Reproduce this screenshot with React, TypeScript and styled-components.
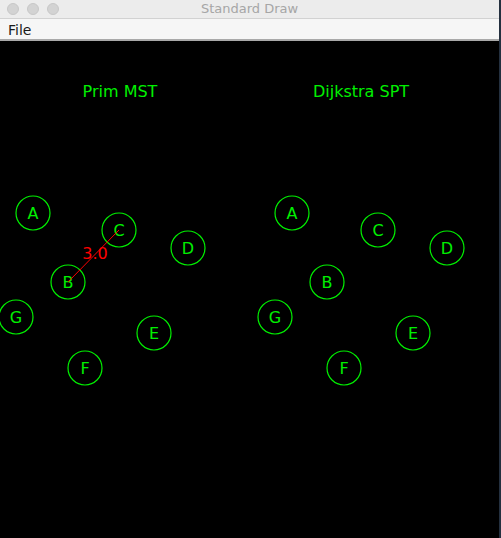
import React from "react";
import styled, { createGlobalStyle } from "styled-components";

const Global = createGlobalStyle`
  html, body { margin: 0; padding: 0; }
  body {
    background: #24303f;
    width: 501px;
    height: 538px;
    overflow: hidden;
    font-family: "DejaVu Sans", "Liberation Sans", sans-serif;
  }
`;

const Window = styled.div`
  width: 499px;
  height: 538px;
  display: flex;
  flex-direction: column;
  background: #000;
`;

const TitleBar = styled.div`
  height: 18px;
  background: #ececec;
  border-bottom: 1px solid #d2d2d2;
  display: flex;
  align-items: center;
  position: relative;
  padding-left: 7px;
  gap: 8px;
`;

const Light = styled.span`
  width: 12px;
  height: 12px;
  border-radius: 50%;
  background: #d3d3d3;
  border: 0.5px solid #c8c8c8;
  box-sizing: border-box;
`;

const Title = styled.div`
  position: absolute;
  left: 0;
  right: 0;
  top: 0;
  height: 18px;
  line-height: 18px;
  text-align: center;
  font-size: 13px;
  color: #a6a6a6;
  font-family: "DejaVu Sans", "Liberation Sans", sans-serif;
`;

const MenuBar = styled.div`
  height: 20px;
  background: #f6f6f6;
  border-bottom: 2px solid #a9a9a9;
  display: flex;
  align-items: center;
  padding-left: 8px;
`;

const MenuItem = styled.span`
  font-size: 14px;
  color: #1a1a1a;
  padding-top: 2px;
`;

const Canvas = styled.svg`
  display: block;
  flex: 1;
  width: 499px;
  background: #000;
`;

type Node = { id: string; x: number; y: number };

const leftNodes: Node[] = [
  { id: "A", x: 33, y: 213 },
  { id: "C", x: 119, y: 230 },
  { id: "D", x: 188, y: 248 },
  { id: "B", x: 68, y: 282 },
  { id: "G", x: 16, y: 317 },
  { id: "E", x: 154, y: 333 },
  { id: "F", x: 85, y: 368 },
];

const rightNodes: Node[] = [
  { id: "A", x: 292, y: 213 },
  { id: "C", x: 378, y: 230 },
  { id: "D", x: 447, y: 248 },
  { id: "B", x: 327, y: 282 },
  { id: "G", x: 275, y: 317 },
  { id: "E", x: 413, y: 333 },
  { id: "F", x: 344, y: 368 },
];

const OFF = 41;
const GREEN = "#00f000";

function Graph({ nodes }: { nodes: Node[] }) {
  return (
    <g>
      {nodes.map((n) => (
        <g key={n.id}>
          <circle cx={n.x} cy={n.y - OFF} r={17} fill="none" stroke={GREEN} strokeWidth={1.2} />
          <text
            x={n.x}
            y={n.y - OFF + 6}
            textAnchor="middle"
            fontSize={16}
            fill={GREEN}
            fontFamily="DejaVu Sans, Liberation Sans, sans-serif"
          >
            {n.id}
          </text>
        </g>
      ))}
    </g>
  );
}

export default function App() {
  return (
    <>
      <Global />
      <Window>
        <TitleBar>
          <Light />
          <Light />
          <Light />
          <Title>Standard Draw</Title>
        </TitleBar>
        <MenuBar>
          <MenuItem>File</MenuItem>
        </MenuBar>
        <Canvas viewBox="0 0 499 497">
          <text x={120} y={97 - OFF} textAnchor="middle" fontSize={16} fill={GREEN} fontFamily="DejaVu Sans, Liberation Sans, sans-serif">
            Prim MST
          </text>
          <text x={361} y={97 - OFF} textAnchor="middle" fontSize={16} fill={GREEN} fontFamily="DejaVu Sans, Liberation Sans, sans-serif">
            Dijkstra SPT
          </text>
          <Graph nodes={leftNodes} />
          <Graph nodes={rightNodes} />
          <line x1={68} y1={282 - OFF} x2={119} y2={230 - OFF} stroke="#ff0000" strokeWidth={1} />
          <text x={95} y={259 - OFF} textAnchor="middle" fontSize={16} fill="#ff0000" fontFamily="DejaVu Sans, Liberation Sans, sans-serif">
            3.0
          </text>
        </Canvas>
      </Window>
    </>
  );
}
